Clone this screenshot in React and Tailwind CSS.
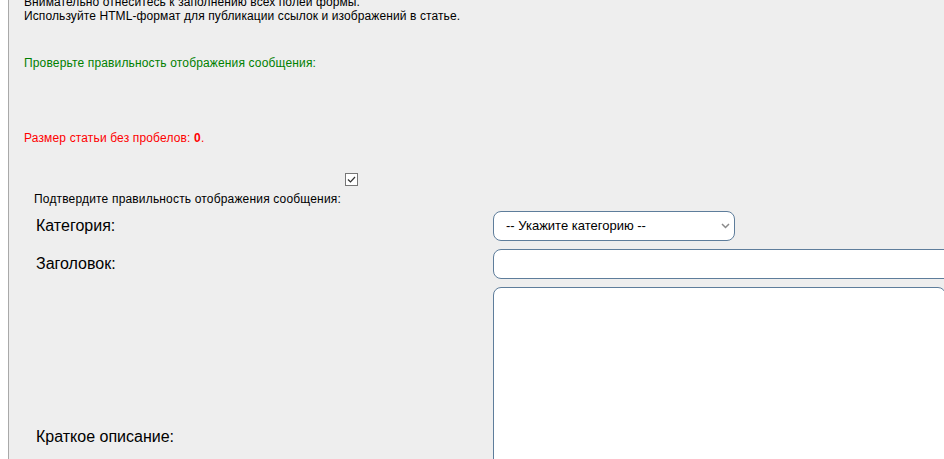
import React from 'react';

const font = { fontFamily: '"Liberation Sans", Arial, sans-serif' };

const App = () => {
    return (
        <div className="h-[459px] w-[944px] overflow-hidden bg-white pl-2 font-['Liberation_Sans',Arial,sans-serif]">
            <div className="flow-root h-full border-l border-[#a9a9a9] bg-[#eeeeee] pl-[15px] text-black">
                <div className="-mt-[5px] text-[12px] leading-[14px] tracking-[0.1px]">
                    <p>Внимательно отнеситесь к заполнению всех полей формы.</p>
                    <p>Используйте HTML-формат для публикации ссылок и изображений в статье.</p>
                </div>

                <p className="mt-[33px] text-[12px] leading-[14px] text-[#008000] tracking-[0.15px]">
                    Проверьте правильность отображения сообщения:
                </p>

                <p className="mt-[61px] text-[12px] leading-[14px] text-[#ff0000] tracking-[0.15px]">
                    Размер статьи без пробелов: <b>0</b>.
                </p>

                <div className="mt-[28px] pl-[321px] h-[13px]">
                    <span className="flex h-[13px] w-[13px] items-center justify-center border border-[#767676] bg-white">
                        <svg width="9" height="7" viewBox="0 0 9 7" fill="none">
                            <path d="M1 3.5 L3.5 6 L8 1" stroke="#333" strokeWidth="1.2" />
                        </svg>
                    </span>
                </div>
                <p className="mt-[6px] pl-[10px] text-[12px] leading-[14px] tracking-[0.17px]">
                    Подтвердите правильность отображения сообщения:
                </p>

                <div className="mt-[5px] flex flex-col gap-2">
                    <div className="flex items-center">
                        <span className="w-[469px] shrink-0 pl-[12px] text-[16px] leading-[18px]">Категория:</span>
                        <div className="relative h-[30px] w-[242px] shrink-0">
                            <select
                                className="h-full w-full appearance-none rounded-[8px] border border-[#5e7d9b] bg-white pl-[12px] text-[13px] text-black outline-none"
                                style={font}
                                defaultValue=""
                            >
                                <option value="">-- Укажите категорию --</option>
                            </select>
                            <svg className="pointer-events-none absolute right-[5px] top-[12px]" width="9" height="6" viewBox="0 0 9 6" fill="none">
                                <path d="M1 1 L4.5 4.5 L8 1" stroke="#8a8a8a" strokeWidth="1.5" />
                            </svg>
                        </div>
                    </div>
                    <div className="flex items-center">
                        <span className="w-[469px] shrink-0 pl-[12px] text-[16px] leading-[18px]">Заголовок:</span>
                        <input type="text" className="h-[30px] w-[480px] shrink-0 rounded-[8px] border border-[#5e7d9b] bg-white outline-none" />
                    </div>
                    <div className="flex items-center">
                        <span className="w-[469px] shrink-0 pl-[12px] text-[16px] leading-[18px]">Краткое описание:</span>
                        <textarea className="h-[300px] w-[453px] shrink-0 resize-none rounded-[8px] border border-[#5e7d9b] bg-white outline-none" />
                    </div>
                </div>
            </div>
        </div>
    );
};

export default App;
